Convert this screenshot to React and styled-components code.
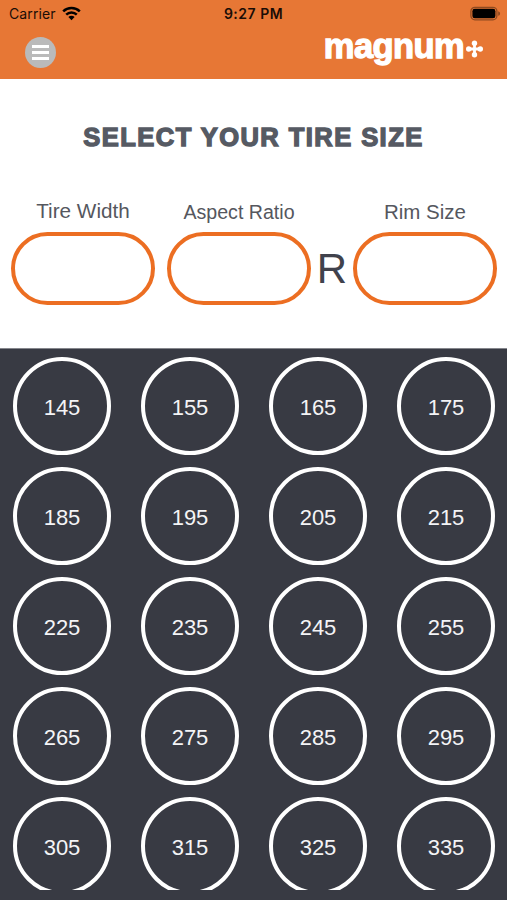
import React from "react";
import styled, { createGlobalStyle } from "styled-components";

const GlobalStyle = createGlobalStyle`
  * {
    box-sizing: border-box;
  }
  body {
    margin: 0;
    background: #383a43;
    font-family: "Liberation Sans", Arial, sans-serif;
  }
`;

const Screen = styled.div`
  display: flex;
  flex-direction: column;
  width: 507px;
  height: 900px;
  overflow: hidden;
`;

const Header = styled.header`
  height: 79px;
  background: #e77735;
`;

const StatusBar = styled.div`
  display: grid;
  grid-template-columns: 1fr auto 1fr;
  align-items: center;
  height: 27px;
  padding: 0 6px 0 9px;
  color: #1a0d06;
  font-family: Inter, sans-serif;
  font-size: 14px;
`;

const Carrier = styled.div`
  display: flex;
  align-items: center;
  gap: 6px;
  letter-spacing: 0.1px;
`;

const Clock = styled.div`
  margin-right: 3px;
  font-weight: 600;
  letter-spacing: 0.5px;
`;

const BatteryIcon = styled.svg`
  justify-self: end;
`;

const NavBar = styled.div`
  display: flex;
  justify-content: space-between;
  height: 52px;
  padding: 0 24px 0 25px;
`;

const MenuButton = styled.button`
  display: flex;
  flex-direction: column;
  align-items: center;
  justify-content: center;
  gap: 3px;
  width: 31px;
  height: 31px;
  margin-top: 10px;
  padding: 0;
  border: 0;
  border-radius: 50%;
  background: #bababa;
`;

const MenuLine = styled.span`
  width: 17px;
  height: 3px;
  background: #fff;
`;

const Logo = styled.div`
  display: flex;
  color: #fff;
`;

const LogoText = styled.span`
  font-size: 34.5px;
  font-weight: 700;
  line-height: 38px;
  letter-spacing: -0.6px;
  -webkit-text-stroke: 1.3px #fff;
`;

const LogoMark = styled.svg`
  margin: 13px 0 0 2px;
`;

const SizePanel = styled.section`
  height: 269px;
  padding-top: 43px;
  background: #fff;
`;

const Title = styled.h1`
  margin: 0;
  color: #565a63;
  font-size: 25.5px;
  font-weight: 700;
  line-height: 30px;
  letter-spacing: 1.45px;
  text-align: center;
  white-space: nowrap;
  -webkit-text-stroke: 1.4px #565a63;
`;

const Fields = styled.div`
  display: flex;
  align-items: flex-end;
  height: 153px;
  padding: 0 10px 0 11px;
`;

const Field = styled.div`
  width: 144px;
  margin-left: ${(props) => props.$gap || 0}px;
`;

const Label = styled.div`
  height: 31px;
  padding-top: ${(props) => props.$drop || 0}px;
  color: #55575e;
  font-size: ${(props) => props.$size || 20.7}px;
  line-height: 20px;
  text-align: center;
  white-space: nowrap;
`;

const Pill = styled.div`
  height: 73px;
  border: 4px solid #ec6e22;
  border-radius: 37px;
`;

const Divider = styled.div`
  width: 42px;
  height: 73px;
  color: #40424c;
  font-size: 42px;
  line-height: 74px;
  text-align: center;
`;

const WidthList = styled.main`
  display: grid;
  grid-template-columns: repeat(4, 98px);
  grid-auto-rows: 98px;
  gap: 12px 30px;
  height: 542px;
  padding: 8.4px 0 0 13px;
  border-top: 1px solid #85868c;
  background: #383a43;
  overflow: hidden;
`;

const WidthButton = styled.button`
  padding: 4px 0 0;
  border: 4px solid #fff;
  border-radius: 50%;
  background: transparent;
  color: #f4f4f6;
  font-family: inherit;
  font-size: 22px;
`;

const Footer = styled.footer`
  height: 10px;
  background: #383a43;
`;

const widths = Array.from({ length: 20 }, (_, i) => 145 + i * 10);

function Battery() {
  return (
    <BatteryIcon width="31" height="16" viewBox="0 0 31 16">
      <rect x="0.9" y="1.3" width="26" height="12.5" rx="4" fill="none" stroke="#8f4a20" strokeWidth="1.3" />
      <rect x="2.4" y="2.8" width="23" height="9.5" rx="2.4" fill="#000" />
      <path d="M28.2 5.2v4.6c2.5-.8 2.5-3.8 0-4.6z" fill="#8f4a20" />
    </BatteryIcon>
  );
}

function WifiIcon() {
  return (
    <svg width="19" height="15" viewBox="0 0 19 15">
      <g fill="none" stroke="#000" strokeWidth="2.5">
        <path d="M1.2 5.4a11.8 11.8 0 0 1 16.6 0" />
        <path d="M4.2 8.6a7.6 7.6 0 0 1 10.6 0" />
      </g>
      <path d="M9.5 14.3L6.4 11.1a4.4 4.4 0 0 1 6.2 0z" fill="#000" />
    </svg>
  );
}

export default function App() {
  return (
    <Screen>
      <GlobalStyle />
      <Header>
        <StatusBar>
          <Carrier>
            Carrier
            <WifiIcon />
          </Carrier>
          <Clock>9:27 PM</Clock>
          <Battery />
        </StatusBar>
        <NavBar>
          <MenuButton aria-label="Menu">
            <MenuLine />
            <MenuLine />
            <MenuLine />
          </MenuButton>
          <Logo>
            <LogoText>magnum</LogoText>
            <LogoMark width="17" height="18" viewBox="0 0 17 18">
              <path d="M8.5 3v12M2.5 9h12" stroke="#fff" strokeWidth="2.8" />
              <g fill="#fff">
                <circle cx="8.5" cy="3.2" r="2.7" />
                <circle cx="8.5" cy="14.8" r="2.7" />
                <circle cx="2.7" cy="9" r="2.7" />
                <circle cx="14.3" cy="9" r="2.7" />
              </g>
            </LogoMark>
          </Logo>
        </NavBar>
      </Header>
      <SizePanel>
        <Title>SELECT YOUR TIRE SIZE</Title>
        <Fields>
          <Field>
            <Label>Tire Width</Label>
            <Pill />
          </Field>
          <Field $gap={12}>
            <Label $drop={1} $size={19.6}>Aspect Ratio</Label>
            <Pill />
          </Field>
          <Divider>R</Divider>
          <Field>
            <Label $drop={1} $size={20.5}>Rim Size</Label>
            <Pill />
          </Field>
        </Fields>
      </SizePanel>
      <WidthList>
        {widths.map((width) => (
          <WidthButton key={width}>{width}</WidthButton>
        ))}
      </WidthList>
      <Footer />
    </Screen>
  );
}
